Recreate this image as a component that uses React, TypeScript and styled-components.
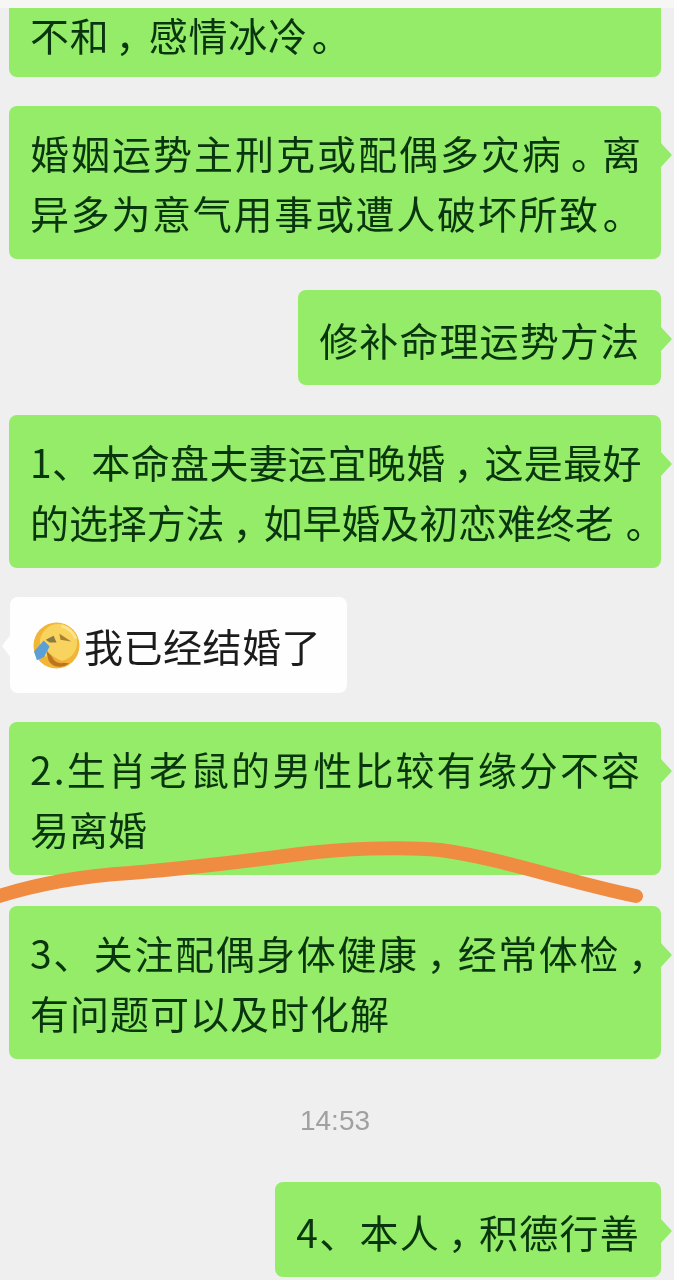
import React from 'react'
import styled, { createGlobalStyle } from 'styled-components'

const GlobalStyle = createGlobalStyle`
  html, body {
    background: #efefef;
    margin: 0;
    padding: 0;
  }
`

const Page = styled.main`
  background: #efefef;
  border-top: 8px solid #f6f6f4;
  box-sizing: border-box;
  display: flex;
  filter: blur(0.5px);
  flex-direction: column;
  font-family: 'Noto Sans CJK SC', 'Liberation Sans', sans-serif;
  height: 1280px;
  overflow: hidden;
  padding: 0 13px 0 9px;
  position: relative;
  width: 674px;
`

const Row = styled.div<{ $side: 'left' | 'right'; $gap?: number }>`
  display: flex;
  justify-content: ${({ $side }) => ($side === 'right' ? 'flex-end' : 'flex-start')};
  margin-top: ${({ $gap }) => $gap ?? 30}px;
`

const Bubble = styled.div<{ $wide?: boolean; $single?: boolean }>`
  background: #95ec69;
  border-radius: 8px;
  box-sizing: border-box;
  color: #0a360f;
  font-size: 39px;
  line-height: 60px;
  padding: ${({ $single }) => ($single ? '19px 21px 16px' : '16px 17px 17px 21px')};
  position: relative;
  width: ${({ $wide }) => ($wide ? '100%' : 'auto')};

  &::after {
    border-bottom: 12px solid transparent;
    border-left: 11px solid #95ec69;
    border-top: 12px solid transparent;
    content: '';
    height: 0;
    position: absolute;
    right: -11px;
    top: 37px;
    width: 0;
  }
`

const ClippedBubble = styled(Bubble)`
  border-radius: 0 0 8px 8px;
  line-height: 52px;
  padding: 0 17px 17px 21px;

  &::after {
    content: none;
  }
`

const WhiteBubble = styled(Bubble)`
  background: #fefefe;
  color: #1c1c1c;
  margin-left: 1px;
  padding: 18px 26px 18px 23px;

  &::after {
    border-left: none;
    border-right: 9px solid #fefefe;
    left: -8px;
    right: auto;
  }
`

const Line = styled.div<{ $tracking?: number }>`
  letter-spacing: ${({ $tracking }) => $tracking ?? 0}px;
  white-space: nowrap;
`

const Mark = styled.span<{ $shift?: number }>`
  letter-spacing: ${({ $shift }) => -($shift ?? 8)}px;
  padding-left: ${({ $shift }) => $shift ?? 8}px;
`

const EmojiLine = styled.div`
  align-items: center;
  display: flex;
  gap: 4px;
  letter-spacing: 0.5px;
  white-space: nowrap;
`

const Timestamp = styled.div`
  color: #a0a0a0;
  font-family: 'Liberation Sans', sans-serif;
  font-size: 28px;
  line-height: 36px;
  margin: 44px 0 0;
  text-align: center;
`

const Scribble = styled.svg`
  left: 0;
  pointer-events: none;
  position: absolute;
  top: 812px;
`

const LaughEmoji = () => (
  <svg width="47" height="47" viewBox="0 0 48 48" aria-hidden="true">
    <circle cx="24" cy="24" r="23.5" fill="#f1b537" />
    <circle cx="26" cy="21" r="19" fill="#f8d35e" />
    <path d="M14 29C20 37 28 42 37 42C31 47 22 47 17 41C15 38 14 33 14 29Z" fill="#b9761f" />
    <path d="M18 33C23 37 28 40 33 41C27 44 21 41 18 33Z" fill="#f3a93c" />
    <path d="M27 12L39 20L28 18Z" fill="#a9802f" />
    <path d="M13 18L21 14L24 21L17 21Z" fill="#8a7a44" />
    <path d="M1 30L11 19L17 25L11 36L4 39Z" fill="#5a9fd8" />
    <path d="M29 4C36 6 41 11 44 17" stroke="#fbe48a" strokeWidth="3" fill="none" />
  </svg>
)

const App: React.FC = () => (
  <>
    <GlobalStyle />
    <Page>
      <Row $side="left" $gap={0}>
        <ClippedBubble $wide>
          <Line $tracking={0.8}>
            不和<Mark $shift={6}>，</Mark>感情冰冷<Mark $shift={4}>。</Mark>
          </Line>
        </ClippedBubble>
      </Row>
      <Row $side="left" $gap={29}>
        <Bubble $wide>
          <Line $tracking={2}>
            婚姻运势主刑克或配偶多灾病<Mark>。</Mark>离
          </Line>
          <Line $tracking={1.7}>
            异多为意气用事或遭人破坏所致<Mark $shift={3}>。</Mark>
          </Line>
        </Bubble>
      </Row>
      <Row $side="right" $gap={31}>
        <Bubble $single>
          <Line $tracking={1.1}>修补命理运势方法</Line>
        </Bubble>
      </Row>
      <Row $side="left">
        <Bubble $wide>
          <Line $tracking={0.35}>
            1、本命盘夫妻运宜晚婚<Mark>，</Mark>这是最好
          </Line>
          <Line $tracking={-0.1}>
            的选择方法<Mark>，</Mark>如早婚及初恋难终老<Mark $shift={12}>。</Mark>
          </Line>
        </Bubble>
      </Row>
      <Row $side="left" $gap={29}>
        <WhiteBubble $single>
          <EmojiLine>
            <LaughEmoji />
            我已经结婚了
          </EmojiLine>
        </WhiteBubble>
      </Row>
      <Row $side="left" $gap={29}>
        <Bubble $wide>
          <Line $tracking={2.1}>2.生肖老鼠的男性比较有缘分不容</Line>
          <Line>易离婚</Line>
        </Bubble>
      </Row>
      <Row $side="left" $gap={31}>
        <Bubble $wide>
          <Line $tracking={1.6}>
            3、关注配偶身体健康<Mark>，</Mark>经常体检<Mark>，</Mark>
          </Line>
          <Line $tracking={1}>有问题可以及时化解</Line>
        </Bubble>
      </Row>
      <Timestamp>14:53</Timestamp>
      <Row $side="right" $gap={43}>
        <Bubble $single>
          <Line $tracking={1.25}>
            4、本人<Mark>，</Mark>积德行善
          </Line>
        </Bubble>
      </Row>
      <Scribble width="674" height="88" viewBox="0 812 674 88" aria-hidden="true">
        <path
          d="M-4 889C40 875 80 868 130 865C190 860 240 854 300 846C340 841 400 838 440 842C500 850 560 872 636 888"
          fill="none"
          stroke="#f08c42"
          strokeLinecap="round"
          strokeWidth="14"
        />
      </Scribble>
    </Page>
  </>
)

export default App
